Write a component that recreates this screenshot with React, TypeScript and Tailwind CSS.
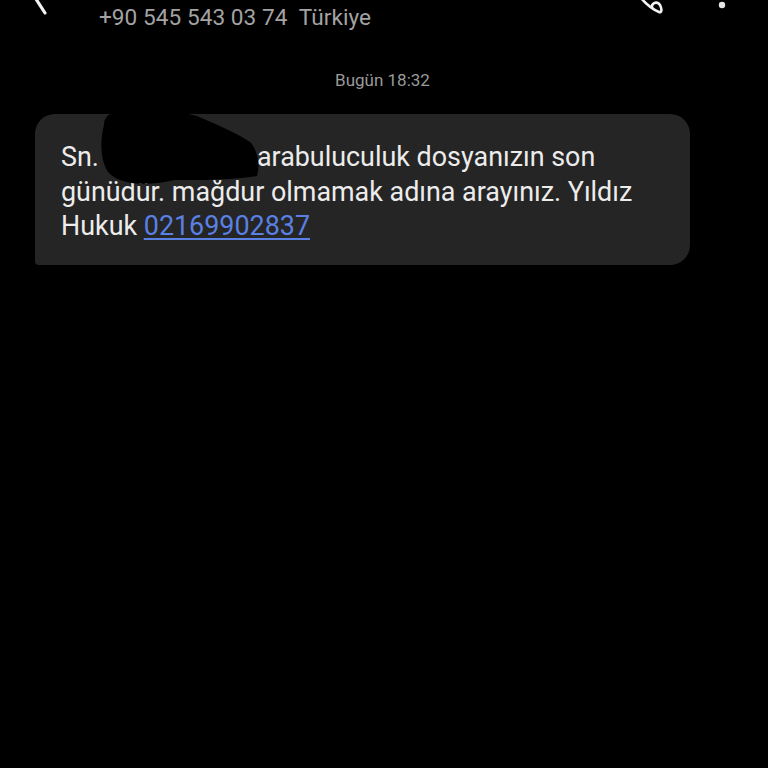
import React from "react";

export default function App() {
  return (
    <div
      className="w-[768px] h-[768px] bg-black overflow-hidden relative"
      style={{ fontFamily: "Roboto, 'Noto Sans', sans-serif" }}
    >
      {/* cut-off header icons */}
      <svg className="absolute left-0 top-0" width="768" height="20" viewBox="0 0 768 20">
        <line x1="36" y1="-1" x2="45" y2="13" stroke="#f2f2f2" strokeWidth="3.2" strokeLinecap="round" />
        <path
          d="M641 -2 C646 4 652 9 659 12 C662 13 662 9 660 5 C658 2 655 2 653 4 C651 6 652 9 655 10"
          fill="none"
          stroke="#f2f2f2"
          strokeWidth="2.6"
          strokeLinecap="round"
        />
        <circle cx="722" cy="5" r="3.2" fill="#e6e6e6" />
      </svg>

      <div className="flex flex-col">
        <div className="h-[36px] pl-[99px] flex items-center">
          <span className="text-[22.6px] text-[#a3a3a3] leading-none tracking-[0.05px]">
            +90 545 543 03 74&nbsp;&nbsp;Türkiye
          </span>
        </div>
        <div className="mt-[36px] flex justify-center">
          <span className="text-[17px] text-[#9a9a9a] leading-none ml-[-3px]">Bugün 18:32</span>
        </div>
        <div className="mt-[25px] pl-[35px]">
          <div className="relative w-[655px] bg-[#252525] rounded-[20px] rounded-bl-[4px] pl-[26px] pt-[26px] pb-[21px]">
            <p className="text-[26.9px] leading-[34.5px] text-[#ececec]">
              Sn.<span className="inline-block w-[158px]"></span>arabuluculuk dosyanızın son
              <br />
              günüdür. mağdur olmamak adına arayınız. Yıldız
              <br />
              Hukuk{" "}
              <span className="text-[#5a80e4] underline decoration-[1.5px] underline-offset-[3px]">
                02169902837
              </span>
            </p>
            <svg
              className="absolute left-0 top-0"
              width="300"
              height="100"
              viewBox="35 114 300 100"
            >
              <path
                d="M104 125 C104 113 115 111 130 111 L165 111 C175 111 185 113 197 116 C215 124 235 132 250 142 C258 150 260 165 257 176 C230 180 200 180 175 180 C150 186 120 186 108 172 C100 160 100 140 104 125 Z"
                fill="#000"
              />
            </svg>
          </div>
        </div>
      </div>
    </div>
  );
}
